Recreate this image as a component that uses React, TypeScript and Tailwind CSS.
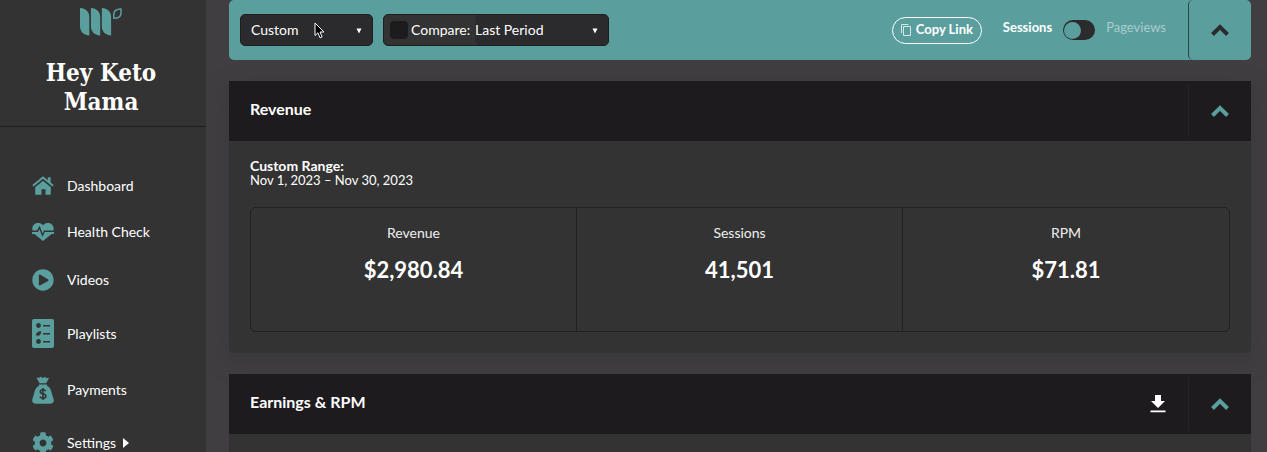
import React from "react";
import { FaCog, FaPlayCircle } from "react-icons/fa";

const HouseIcon = ({ className }: { className?: string }) => (
  <svg viewBox="0 0 22 19" className={className} fill="currentColor" aria-hidden="true">
    <path d="M11 4.700 18.800 11v6.800c0 .6-.4 1-1 1h-4.300v-5.600h-4v5.600H4.200c-.6 0-1-.4-1-1V11z" />
    <path d="M.900 10.200 11 2l10.100 8.200" fill="none" stroke="#333" strokeWidth="4" />
    <path d="M.900 9.700 11 1.500l10.100 8.200" fill="none" stroke="currentColor" strokeWidth="2" />
    <path d="M15.800 1.300h2.800v6.200l-2.800-2.300z" />
  </svg>
);

const HeartIcon = ({ className }: { className?: string }) => (
  <svg viewBox="0 0 22 18" className={className} aria-hidden="true">
    <path
      d="M11 2.300C9.500.6 7.900 0 6 0 2.700 0 .300 2.500.300 5.700c0 1.300.3 2.400.7 3.300H0v2h2.500L11 18l8.500-7H22V9h-1c.4-.9.700-2 .7-3.300C21.700 2.500 19.300 0 16 0c-1.900 0-3.500.6-5 2.300z"
      fill="currentColor"
    />
    <path d="M0 8.200h5.500l2-3.700 3 7.800 1.900-4.100H22" fill="none" stroke="#333" strokeWidth="1.400" />
  </svg>
);

const MoneyBag = ({ className }: { className?: string }) => (
  <svg viewBox="0 0 22 28" className={className} fill="currentColor" aria-hidden="true">
    <path d="M7.600 7.200 4.800 2.600c-.3-.8.4-1.400 1.100-1 .6.4 1 .5 1.600 0C8.400.5 9.300.5 10 1.500c.5.7 1.300.7 1.800.1.5-.8 1.700-.9 2.200 0 .5.7 1 .7 1.600.4.7-.4 1.300.2 1 .9l-2.500 4.300z" />
    <path d="M7.300 8.500h7.400c.7 0 .7.7.1 1.200 3.700 1.600 4.600 5.400 5.400 9 .5 2 1.600 3.800 1.600 5.800 0 2.200-1.600 3.300-4 3.300H4.200c-2.400 0-4-1.100-4-3.300 0-2 1.100-3.800 1.600-5.800.8-3.600 1.700-7.400 5.400-9-.6-.5-.6-1.200.1-1.200z" />
    <path
      d="M13.800 14.900c-.6-.8-1.600-1.200-2.800-1.200-1.600 0-2.700.8-2.700 2 0 2.900 5.600 1.300 5.600 4.300 0 1.300-1.200 2.100-2.900 2.100-1.300 0-2.500-.5-3.100-1.500M11 12v12"
      fill="none"
      stroke="#333"
      strokeWidth="1.600"
    />
  </svg>
);

const PlaylistIcon = ({ className }: { className?: string }) => (
  <svg viewBox="0 0 22 29" className={className} aria-hidden="true">
    <rect width="22" height="29" rx="2" fill="currentColor" />
    <g fill="#333">
      <circle cx="6.500" cy="6.500" r="2.400" />
      <path d="M4.200 16.500c-.4-2.500 1.400-4.200 5-4.200.1 2.600-1.300 4.500-3.400 4.500z" />
      <circle cx="6.500" cy="22.500" r="2.400" />
      <rect x="11" y="6" width="7" height="1.500" />
      <rect x="11" y="14" width="7" height="1.500" />
      <rect x="11" y="22" width="7" height="1.500" />
    </g>
  </svg>
);

const Chevron = ({ className }: { className?: string }) => (
  <svg viewBox="0 0 18 12" className={`w-[18px] h-3 ${className ?? ""}`} aria-hidden="true">
    <path d="M1.500 10.500 9 3l7.500 7.500" fill="none" stroke="currentColor" strokeWidth="4" />
  </svg>
);

const navItems = [
  { label: "Dashboard", icon: <HouseIcon className="w-[22px] h-[19px]" />, height: "h-[19px]" },
  { label: "Health Check", icon: <HeartIcon className="w-[22px] h-[18px]" />, height: "h-[18px]" },
  { label: "Videos", icon: <FaPlayCircle className="w-[22px] h-[22px]" />, height: "h-[22px]" },
  { label: "Playlists", icon: <PlaylistIcon className="w-[22px] h-[29px]" />, height: "h-[29px]" },
  { label: "Payments", icon: <MoneyBag className="w-[22px] h-7" />, height: "h-7" },
  { label: "Settings", icon: <FaCog className="w-[22px] h-[22px]" />, height: "h-[22px]", more: true },
];

const stats = [
  { label: "Revenue", value: "$2,980.84" },
  { label: "Sessions", value: "41,501" },
  { label: "RPM", value: "$71.81" },
];

const Sidebar = () => (
  <aside className="w-[206px] shrink-0 bg-[#333]">
    <div className="flex flex-col items-center border-b border-[#1f1f1f] pt-2 pr-1 pb-[10px]">
      <svg viewBox="0 0 42 28" className="w-[42px] h-7 text-[#5a9f9e]" aria-hidden="true">
        <g fill="currentColor">
          <path d="M0 0c6 .4 9.300 4 9.300 9v18.500C3.300 27 0 23.500 0 18z" />
          <path d="M10.900 0c6 .4 9.300 4 9.300 9v18.500c-6-.5-9.300-4-9.300-9.500z" />
          <path d="M21.800 0c6 .4 9.300 4 9.300 9v18.500c-6-.5-9.300-4-9.300-9.500z" />
        </g>
        <path
          d="M41 1c-4.700 0-7.200 1.800-7.200 5.300v4c4.700 0 7.200-1.800 7.200-5.300z"
          fill="none"
          stroke="currentColor"
          strokeWidth="1.500"
        />
      </svg>
      <h1 className="mt-[22px] w-36 text-center font-['DejaVu_Serif_Condensed','DejaVu_Serif',serif] text-[24px] leading-[29px] font-bold text-white">
        Hey Keto Mama
      </h1>
    </div>
    <nav className="flex flex-col gap-7 pt-[49px] pl-8">
      {navItems.map((item) => (
        <a key={item.label} href="#" className={`flex items-center gap-[13px] ${item.height}`}>
          <span className="text-[#5a9f9e]">{item.icon}</span>
          <span className="text-[14px] leading-[18px] text-white">{item.label}</span>
          {item.more && (
            <svg viewBox="0 0 6 10" className="-ml-[6px] w-[6px] h-[10px]" aria-hidden="true">
              <path d="M0 0v10l6-5z" fill="#fff" />
            </svg>
          )}
        </a>
      ))}
    </nav>
  </aside>
);

const SelectArrow = () => (
  <svg viewBox="0 0 6 6" className="pointer-events-none absolute right-[10px] top-[13px] w-[6px] h-[6px]" aria-hidden="true">
    <path d="M.5.5h5L3 5.500z" fill="#fff" />
  </svg>
);

const Toolbar = () => (
  <div className="flex h-[60px] shrink-0 rounded-[5px] bg-[#5a9f9e] text-white">
    <div className="flex flex-1 items-center pl-[11px] pr-[22px]">
      <div className="relative w-[133px] rounded-[5px] border border-[#1e1e1f] bg-[#2b2a2d]">
        <select aria-label="Date range" className="block h-[30px] w-full appearance-none bg-transparent px-[10px] pb-[2px] text-[14px]">
          <option>Custom</option>
        </select>
        <SelectArrow />
        <svg viewBox="0 0 11 17" className="pointer-events-none absolute left-[73px] top-[7px] w-[11px] h-[17px]" aria-hidden="true">
          <path d="M1 1v12.500l2.900-2.700 2.100 5 2.100-.9-2.100-4.900h4z" fill="#000" stroke="#fff" />
        </svg>
      </div>
      <div className="ml-[10px] flex w-[226px] items-center rounded-[5px] border border-[#1e1e1f] bg-[#333]">
        <input
          id="compare"
          type="checkbox"
          className="ml-[6px] h-[18px] w-[18px] appearance-none rounded-[4px] bg-[#1d1b1e]"
        />
        <label htmlFor="compare" className="ml-[3px] w-16 pb-[2px] text-[14px] whitespace-nowrap">
          Compare:
        </label>
        <div className="relative flex-1 rounded-[5px] bg-[#2b2a2d]">
          <select aria-label="Compare period" className="block h-[30px] w-full appearance-none bg-transparent pb-[2px] text-[14px]">
            <option>Last Period</option>
          </select>
          <SelectArrow />
        </div>
      </div>
      <button className="ml-auto flex h-[27px] w-[90px] items-center justify-center gap-[5px] rounded-full border border-white text-[13px] font-bold whitespace-nowrap">
        <svg viewBox="0 0 10 12" className="w-[10px] h-3 shrink-0" fill="none" stroke="#d5e7e6" aria-hidden="true">
          <path d="M.5 9V.5h7M2.500 2.500h7v9h-7z" />
        </svg>
        Copy Link
      </button>
      <div className="ml-[21px] flex items-center gap-[11px] text-[13px]">
        <label htmlFor="metric" className="pb-1 font-bold">
          Sessions
        </label>
        <input
          id="metric"
          type="checkbox"
          role="switch"
          className="flex h-5 w-8 appearance-none items-center rounded-full bg-[#2b2a2d] px-px before:h-[17px] before:w-[17px] before:rounded-full before:bg-[#5a9f9e] before:content-['']"
        />
        <label htmlFor="metric" className="pb-1 text-[#a9cccc]">
          Pageviews
        </label>
      </div>
    </div>
    <button
      aria-label="Collapse filters"
      className="flex w-[63px] items-center justify-center rounded-[5px] border-l border-[#2b4545] text-[#2b2a2d]"
    >
      <Chevron />
    </button>
  </div>
);

const CardHeader = ({ title, download }: { title: string; download?: boolean }) => (
  <div className="flex h-[60px] items-center bg-[#1d1b1e] pl-[21px]">
    <h2 className="flex-1 pb-[5px] text-[16px] font-bold text-white">{title}</h2>
    {download && (
      <button aria-label="Download" className="mr-[22px] text-white">
        <svg viewBox="0 0 16 18" className="w-4 h-[18px]" fill="currentColor" aria-hidden="true">
          <path d="M5 0h6v6h4l-7 7-7-7h4zM.500 15.500h15v1.800H.500z" />
        </svg>
      </button>
    )}
    <button
      aria-label={`Collapse ${title}`}
      className="flex h-14 w-[63px] items-center justify-center rounded-l-[3px] border-l border-[#262427] text-[#5a9f9e]"
    >
      <Chevron />
    </button>
  </div>
);

const App = () => {
  return (
    <div className="flex h-screen overflow-hidden bg-[#403e41] font-[Lato,sans-serif]">
      <Sidebar />
      <main className="flex min-w-0 flex-1 flex-col gap-[21px] pl-[23px] pr-4">
        <Toolbar />
        <section className="shrink-0 rounded-b-[5px] bg-[#333] shadow-[0_8px_20px_#3339]">
          <CardHeader title="Revenue" />
          <div className="px-[21px] pt-[18px] pb-[21px] text-white">
            <p className="text-[14px] leading-[14px] font-bold">Custom Range:</p>
            <p className="text-[13px] leading-[14px]">Nov 1, 2023 – Nov 30, 2023</p>
            <dl className="mt-5 grid h-[125px] grid-cols-3 divide-x divide-[#212121] rounded-[5px] border border-[#212121]">
              {stats.map((stat) => (
                <div key={stat.label} className="pt-4 text-center">
                  <dt className="text-[14px] leading-[18px] text-[#f0f0f0]">{stat.label}</dt>
                  <dd className="mt-4 text-[22px] leading-6 font-bold">{stat.value}</dd>
                </div>
              ))}
            </dl>
          </div>
        </section>
        <section className="shrink-0 bg-[#333] pb-10">
          <CardHeader title="Earnings & RPM" download />
        </section>
      </main>
    </div>
  );
};

export default App;
